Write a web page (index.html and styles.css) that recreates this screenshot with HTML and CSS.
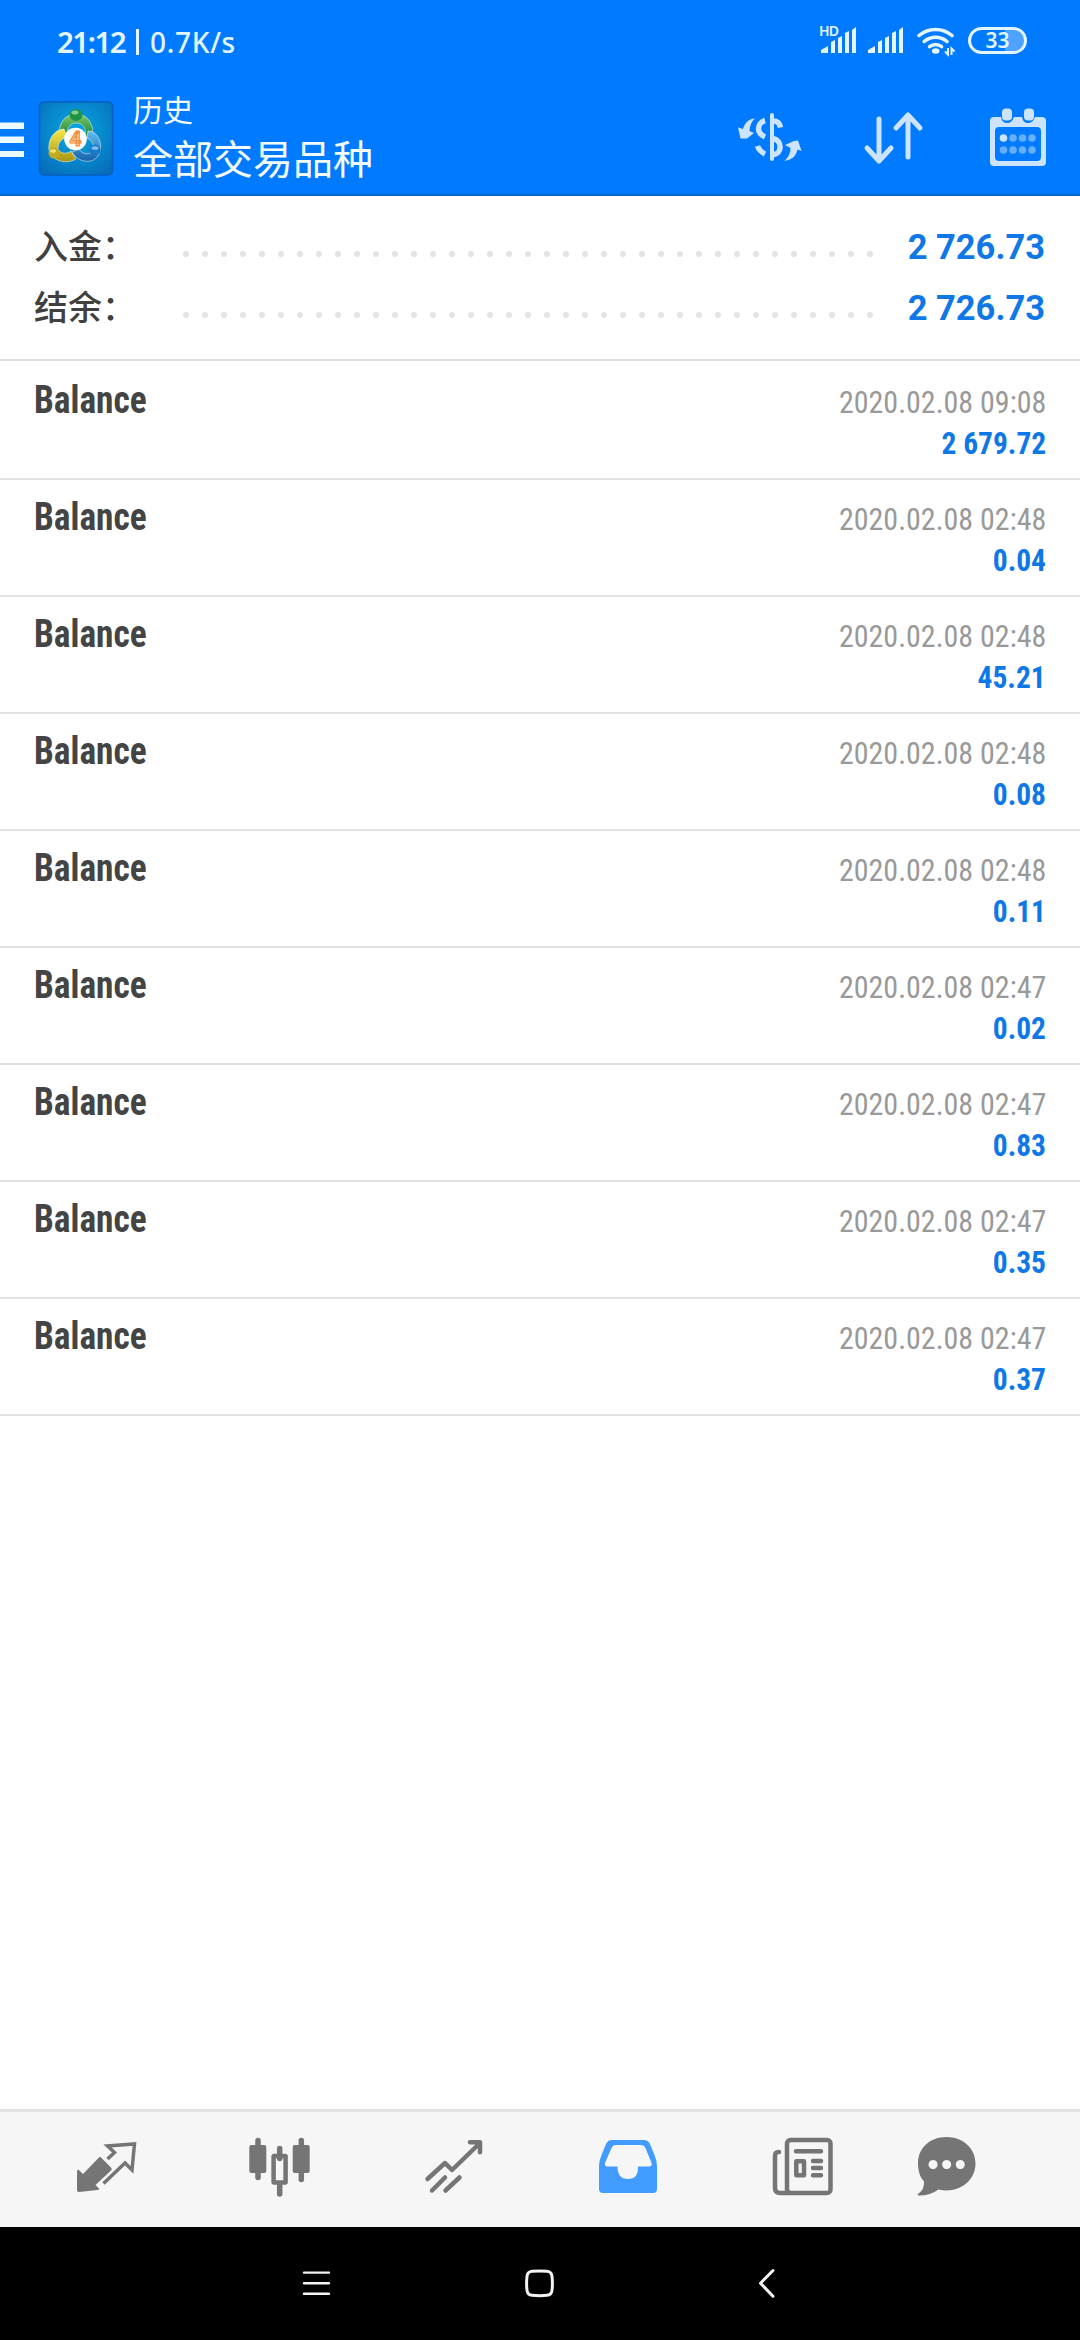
FILE: index.html
```html
<!DOCTYPE html>
<html lang="zh-CN">
<head>
<meta charset="utf-8">
<title>历史</title>
<link rel="stylesheet" href="styles.css">
</head>
<body>
<div class="screen">
  <header class="top">
    <div class="status">
      <div class="clock"><span class="time">21:12</span><span class="bar"></span><span class="rate">0.7K/s</span></div>
      <div class="indicators">
        <svg class="signals" viewBox="815 20 95 42">
          <text class="hd" x="819" y="36" textLength="20">HD</text>
          <g id="bars"><path d="M821 53v-3l7-4v7zM831 53V42l4-2v13zM838 53V38l4-2v17zM845 53V33l4-2v22zM852 53V30l4-3v26z"/></g>
          <use href="#bars" x="47"/>
        </svg>
        <svg class="wifi" viewBox="910 20 50 42">
          <path class="wifi-arc" d="M919 35.5a25.5 25.5 0 0 1 33 0M924.2 41.5a17.5 17.5 0 0 1 22.8 0M929.6 46.7a9.5 9.5 0 0 1 12 0"/>
          <ellipse cx="935.7" cy="51" rx="3.8" ry="2.8"/>
          <path class="traffic" d="M948 48v6.5l-3-3M951.500 55v-6.5l3 3"/>
        </svg>
        <div class="battery"><span>33</span></div>
      </div>
    </div>
    <div class="appbar">
      <svg class="burger" viewBox="0 83 36 111"><path d="M0 122.500h24v6.5H0zM0 136.500h24v6.5H0zM0 151h24v6H0z"/></svg>
      <svg class="logo" viewBox="36 99 80 80">
        <defs>
          <radialGradient id="tile" cx=".5" cy=".4" r=".75"><stop offset="0" stop-color="#08a9e2"/><stop offset="1" stop-color="#0669b8"/></radialGradient>
          <linearGradient id="green" x2="0" y2="1"><stop offset="0" stop-color="#7cc96b"/><stop offset="1" stop-color="#16803a"/></linearGradient>
          <linearGradient id="yellow" x2="0" y2="1"><stop offset="0" stop-color="#f3e94a"/><stop offset="1" stop-color="#a99512"/></linearGradient>
          <linearGradient id="blue" x2="0" y2="1"><stop offset="0" stop-color="#64bdf0"/><stop offset="1" stop-color="#1462a9"/></linearGradient>
        </defs>
        <rect x="39.500" y="102" width="73" height="73" rx="4" fill="url(#tile)" stroke="#075fc0" stroke-width="1.500"/>
        <g class="ring">
          <path d="M60 138C57 124 65 114 76 114S95 124 92 138L85 137C87 127 82 123 76 123S66 129 67 138z" fill="url(#green)"/>
          <path d="M64 129C52 130 48 142 49 150 52 161 66 165 76 159L71 151C66 155 60 153 58 149 58 143 61 139 67 137z" fill="url(#yellow)"/>
          <path d="M88 131C99 131 103 145 99 154 94 165 78 163 72 152L79 149C83 155 89 155 93 151 95 145 92 140 87 138z" fill="url(#blue)"/>
        </g>
        <ellipse cx="76" cy="115" rx="6.500" ry="6" fill="#219344"/><ellipse cx="75" cy="112.500" rx="3.500" ry="2" fill="#86cf91"/>
        <circle cx="54" cy="153" r="5.500" fill="#c2ab20"/><ellipse cx="53" cy="151" rx="3" ry="1.800" fill="#f0e270"/>
        <circle cx="95" cy="150" r="5.500" fill="#1e78c8"/><ellipse cx="95" cy="148" rx="3.500" ry="1.800" fill="#7bc1ee"/>
        <circle cx="75.500" cy="139" r="11.300" fill="#fff"/>
        <text class="four" x="75.500" y="146.300">4</text>
      </svg>
      <div class="titles"><div class="subtitle">历史</div><div class="title">全部交易品种</div></div>
      <svg class="actions" viewBox="720 83 360 111">
        <g class="soft">
          <path d="M770 115q0-2 2-2t2 2v44q0 2-2 2t-2-2z"/>
          <path class="dollar" d="M773 121c5 0 7 3 7.500 6.500M765 120.500c-4 1-6.500 4.500-6.500 8.500s2.500 6 6.500 8M773 138.500c10 2 9 16 0 16M757.500 146c1 3 3.500 6 7.500 8"/>
          <path d="M755 118.500C749 119 745 122 743 129L738 127.500 740.500 138.500H747L754 133 749.500 131C750 126 751 122 755 118.500zM784.500 161c8-1.500 11.500-5 13-11.500l4 1.500-3.500-10.500-4 .5-9 4 5.500 3c0 5-2 9-6 13z"/>
          <path class="sort" d="M879 119v42M867 148l12 13 12-13M908 157v-42M896 128l12-13 12 13"/>
          <path fill-rule="evenodd" d="M990 121q0-4 4-4h7q1 6 6 6t7-6h8q1 6 6 6t7-6h7q4 0 4 4v41q0 4-4 4h-48q-4 0-4-4zM995 131v26q0 4 4 4h38q4 0 4-4v-26q0-4-4-4h-38q-4 0-4 4z"/>
          <rect x="1002" y="108.500" width="10" height="12" rx="4"/><rect x="1024" y="108.500" width="10" height="12" rx="4"/>
          <circle cx="1003.500" cy="138" r="3.800"/>
          <g class="days"><circle cx="1013" cy="138" r="3.800"/><circle cx="1022.500" cy="138" r="3.800"/><circle cx="1032" cy="138" r="3.800"/><circle cx="1003.500" cy="150" r="3.800"/><circle cx="1013" cy="150" r="3.800"/><circle cx="1022.500" cy="150" r="3.800"/><circle cx="1032" cy="150" r="3.800"/></g>
        </g>
      </svg>
    </div>
  </header>
  <main>
    <section class="summary">
      <div class="sum"><span class="label">入金：</span><span class="dots"></span><span class="total">2 726.73</span></div>
      <div class="sum"><span class="label">结余：</span><span class="dots"></span><span class="total">2 726.73</span></div>
    </section>
    <section class="list">
      <div class="row"><span class="name">Balance</span><div class="right"><span class="date">2020.02.08 09:08</span><span class="amount">2 679.72</span></div></div>
      <div class="row"><span class="name">Balance</span><div class="right"><span class="date">2020.02.08 02:48</span><span class="amount">0.04</span></div></div>
      <div class="row"><span class="name">Balance</span><div class="right"><span class="date">2020.02.08 02:48</span><span class="amount">45.21</span></div></div>
      <div class="row"><span class="name">Balance</span><div class="right"><span class="date">2020.02.08 02:48</span><span class="amount">0.08</span></div></div>
      <div class="row"><span class="name">Balance</span><div class="right"><span class="date">2020.02.08 02:48</span><span class="amount">0.11</span></div></div>
      <div class="row"><span class="name">Balance</span><div class="right"><span class="date">2020.02.08 02:47</span><span class="amount">0.02</span></div></div>
      <div class="row"><span class="name">Balance</span><div class="right"><span class="date">2020.02.08 02:47</span><span class="amount">0.83</span></div></div>
      <div class="row"><span class="name">Balance</span><div class="right"><span class="date">2020.02.08 02:47</span><span class="amount">0.35</span></div></div>
      <div class="row"><span class="name">Balance</span><div class="right"><span class="date">2020.02.08 02:47</span><span class="amount">0.37</span></div></div>
    </section>
  </main>
  <nav class="tabs">
    <svg class="tab" viewBox="19 2112 174 115">
      <path d="M100.500 2157l11 11q.5 1.500-.5 2.500l-15.500 14.500 4 4q-1 1-2 1l-18.500 2q-2 0-2-2v-19q1-2 2.500-.5l3.500 3.500 16-16.500q1-1 1.500-.5z"/>
      <path class="line" d="M107.500 2159l7-6.500-7-6.500 27-2-2.500 26-7-7-21.500 20.500"/>
    </svg>
    <svg class="tab" viewBox="193 2112 174 115">
      <path class="wick" d="M258 2140.500v37M301.300 2140.500v39M279.700 2148.500v10M279.700 2184v10"/>
      <rect x="249.300" y="2145" width="17" height="28" rx="2"/><rect x="292.700" y="2145" width="17" height="28" rx="2"/>
      <rect class="hollow" x="273.600" y="2156" width="12" height="26.500" rx=".5"/>
    </svg>
    <svg class="tab" viewBox="367 2112 174 115">
      <path class="trend" d="M427.500 2179l17.500-16 7 7 28-27M470 2142.300h10v10M432 2190.500l13-13M445.500 2190.500l14-13"/>
    </svg>
    <svg class="tab active" viewBox="541 2112 174 115">
      <path fill-rule="evenodd" d="M612 2140h32q4 0 6 4l4.500 11q2.500 6 2.500 11v23q0 4-4 4h-50q-4 0-4-4v-23q0-5 2.500-11l4.500-11q2-4 6-4zM605 2163q-1 3 2 3.500h10.500q0 12.500 10.500 12.500t10-12.500h11.500q3-.5 2-3.500l-6-15q-1.500-3-4.500-3h-25q-3 0-4.500 3z"/>
    </svg>
    <svg class="tab" viewBox="715 2112 174 115">
      <rect class="page" x="787" y="2140" width="43.500" height="53" rx="3.500"/>
      <path class="page" d="M779 2152c-3 0-4 1-4 4v32q0 5 5 5h10"/>
      <path class="page" d="M796 2151.300h25M813 2161h8M813 2168h8M813 2175.300h8"/>
      <rect class="page" x="796.300" y="2161.300" width="7.700" height="14"/>
    </svg>
    <svg class="tab last" viewBox="889 2112 114 115">
      <path fill-rule="evenodd" d="M946.500 2137c16 0 29 11 29 26.500s-13 27-29 27q-4 0-8-1-8 6-19.500 6c-2 0-1.500-1.500-.5-2q6-4 5.500-12c-4-4-6-11-6-18 0-15.500 12-26.500 28.500-26.500zM933 2160a4.500 4.500 0 1 0 .1 0zM946.600 2160a4.500 4.500 0 1 0 .1 0zM960.200 2160a4.500 4.500 0 1 0 .1 0z"/>
    </svg>
  </nav>
  <footer class="system">
    <svg viewBox="0 2227 1080 113">
      <path d="M304 2272.600h25M304 2283.300h25M304 2293.800h25"/>
      <path stroke-width="3" d="M532 2271.300q7.500-.8 15 0 4.500.5 5 5 .8 7 0 14-.5 4.500-5 5-7.500.8-15 0-4.500-.5-5-5-.8-7 0-14 .5-4.500 5-5zM773 2270.500l-12.500 12.700 12.500 13"/>
    </svg>
  </footer>
</div>
</body>
</html>
```
FILE: styles.css
```css
* { box-sizing: border-box; }
body { margin: 0; background: #fff; }
svg { display: block; flex: none; }
.screen {
  width: 1080px; height: 2340px; display: flex; flex-direction: column; overflow: hidden;
  font-family: Roboto, "Noto Sans CJK SC", sans-serif; background: #fff;
}

.top { height: 196px; flex: none; background: #007aff; border-bottom: 2px solid #0b63c8; color: #fff; }
.status { height: 83px; display: flex; justify-content: space-between; padding: 0 53px 0 57px; }
.clock { display: flex; align-items: center; height: 83px; color: #e3f6ff; font-family: "Noto Sans", sans-serif; font-weight: 600; }
.time { width: 79px; font-size: 29.500px; line-height: 40px; letter-spacing: -1.500px; white-space: nowrap; }
.bar { width: 3px; height: 26px; background: #e3f6ff; }
.rate { margin-left: 11px; font-size: 28px; line-height: 40px; font-weight: 500; letter-spacing: 0.700px; }
.indicators { display: flex; padding-top: 20px; fill: #e3f6ff; }
.signals { width: 95px; height: 42px; }
.hd { font: 600 14px "Noto Sans", sans-serif; }
.wifi { width: 50px; height: 42px; }
.wifi-arc { fill: none; stroke: #e3f6ff; stroke-width: 3.600; stroke-linecap: round; }
.traffic { fill: none; stroke: #e3f6ff; stroke-width: 2; }
.battery {
  margin: 7px 0 0 8px; width: 59px; height: 27px; border: 3px solid #e3f6ff; border-radius: 14px;
  background: linear-gradient(90deg, transparent 65%, #4da3ff 65%); background-clip: padding-box;
  color: #e3f6ff; font: 600 21px/20px "Noto Sans", sans-serif; text-align: center;
}
.appbar { height: 111px; display: flex; }
.burger { width: 36px; height: 111px; fill: #eafaff; }
.logo { width: 80px; height: 80px; margin-top: 16px; }
.ring { stroke: #ffffff80; stroke-width: 1; }
.four { font: 700 21px Roboto, sans-serif; text-anchor: middle; fill: #ffd3a3; stroke: #ef8a35; stroke-width: 1.200; }
.titles { flex: 1; padding-left: 17px; color: #f2fcff; }
.subtitle { font-size: 30px; line-height: 40px; margin-top: 8px; height: 40px; }
.title { font-size: 40px; line-height: 60px; }
.actions { width: 360px; height: 111px; }
.soft { fill: #cce4ff; }
.dollar { fill: none; stroke: #cce4ff; stroke-width: 5.500; stroke-linecap: butt; }
.sort { fill: none; stroke: #cce4ff; stroke-width: 5; stroke-linecap: round; stroke-linejoin: round; }
.days { fill: #66afff; }

main { flex: 1; }
.summary { height: 165px; padding: 20px 35px 0 34px; border-bottom: 2px solid #e2e2e2; }
.sum { height: 61px; display: flex; align-items: center; }
.label { width: 142px; font-size: 34px; font-weight: 500; line-height: 60px; color: #404040; white-space: nowrap; }
.dots { width: 703px; height: 20px; margin-top: 15px; background: radial-gradient(circle at 10px 10px, #e4e4e4 2.700px, transparent 3.500px) 0 0 / 19px 20px; }
.total { flex: 1; text-align: right; white-space: nowrap; font-size: 34.500px; font-weight: 700; color: #0f78e6; }
.list { padding-top: 2px; font-family: "Roboto Condensed", Roboto, sans-serif; font-stretch: 75%; }
.row { height: 117px; padding: 0 34px; display: flex; justify-content: space-between; border-bottom: 2px solid #e2e2e2; }
.name { margin-top: 13px; font-size: 38px; line-height: 48px; font-weight: 700; color: #444; transform: scaleX(.93); transform-origin: left; }
.right { display: flex; flex-direction: column; align-items: flex-end; padding-top: 19px; }
.date, .amount { transform-origin: right; }
.date { font-size: 32px; line-height: 41px; color: #999; transform: scaleX(.937); }
.amount { font-size: 31px; line-height: 41px; font-weight: 700; color: #0f78e6; transform: scaleX(.95); }

.tabs { height: 118px; flex: none; display: flex; padding-left: 19px; background: #f6f6f6; border-top: 3px solid #e2e2e2; }
.tab { width: 174px; height: 115px; fill: #757575; stroke: none; }
.last { width: 114px; }
.active { fill: #429cff; }
.line { fill: none; stroke: #757575; stroke-width: 3.500; }
.wick { fill: none; stroke: #757575; stroke-width: 5.500; stroke-linecap: round; }
.hollow { fill: none; stroke: #757575; stroke-width: 4.500; }
.trend { fill: none; stroke: #757575; stroke-width: 4.500; stroke-linecap: round; stroke-linejoin: round; }
.page { fill: none; stroke: #757575; stroke-width: 4.500; stroke-linecap: round; stroke-linejoin: round; }
.system { height: 113px; flex: none; background: #000; }
.system svg { width: 1080px; height: 113px; fill: none; stroke: #f4f4f4; stroke-width: 2.400; stroke-linecap: round; stroke-linejoin: round; }
```
